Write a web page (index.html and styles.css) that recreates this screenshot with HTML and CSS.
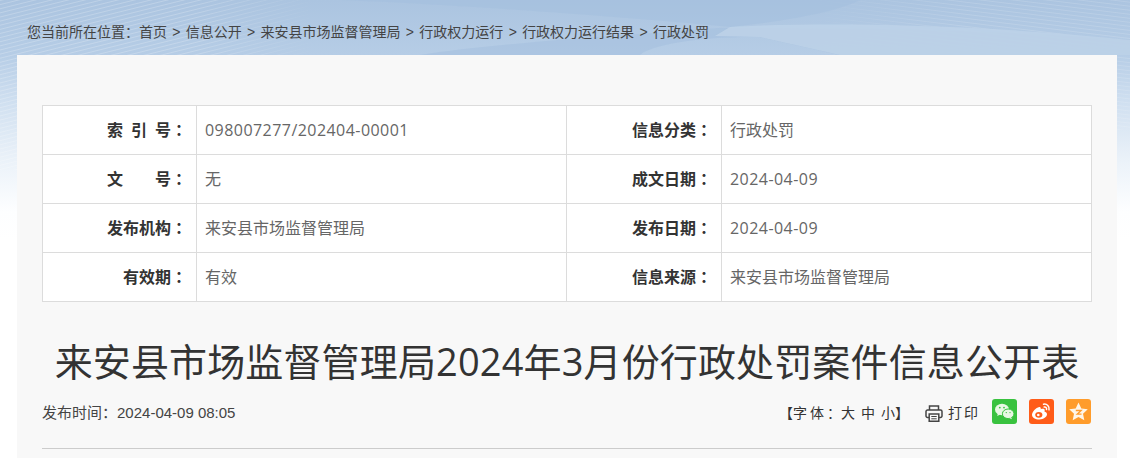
FILE: index.html
```html
<!DOCTYPE html>
<html lang="zh-CN">
<head>
<meta charset="utf-8">
<title>来安县市场监督管理局2024年3月份行政处罚案件信息公开表</title>
<link rel="stylesheet" href="styles.css">
</head>
<body>
<svg class="bg-art" viewBox="0 0 1130 240" width="1130" height="240" aria-hidden="true">
  <defs>
    <linearGradient id="fade" x1="0" y1="0" x2="0" y2="1">
      <stop offset="0" stop-color="#abc4e0"/>
      <stop offset="0.23" stop-color="#b6cde6"/>
      <stop offset="0.42" stop-color="#cfdff0"/>
      <stop offset="0.67" stop-color="#ebf2f9"/>
      <stop offset="0.88" stop-color="#fdfeff"/>
      <stop offset="1" stop-color="#ffffff"/>
    </linearGradient>
    <linearGradient id="edgeL" x1="0" y1="0" x2="1" y2="0">
      <stop offset="0" stop-color="#fff"/>
      <stop offset="0.6" stop-color="#fff"/>
      <stop offset="1" stop-color="#000"/>
    </linearGradient>
    <linearGradient id="edgeR" x1="0" y1="0" x2="1" y2="0">
      <stop offset="0" stop-color="#000"/>
      <stop offset="0.5" stop-color="#fff"/>
      <stop offset="1" stop-color="#fff"/>
    </linearGradient>
    <mask id="maskL"><rect width="320" height="170" fill="url(#edgeL)"/></mask>
    <mask id="maskR"><rect x="800" width="330" height="130" fill="url(#edgeR)"/></mask>
    <pattern id="hatchL" width="60" height="4" patternUnits="userSpaceOnUse" patternTransform="rotate(-14)">
      <rect y="0" width="60" height="1" fill="#ffffff" opacity=".22"/>
    </pattern>
    <pattern id="hatchR" width="60" height="4" patternUnits="userSpaceOnUse" patternTransform="rotate(7)">
      <rect y="0" width="60" height="1" fill="#ffffff" opacity=".14"/>
    </pattern>
  </defs>
  <rect width="1130" height="240" fill="url(#fade)"/>
  <rect width="320" height="170" fill="url(#hatchL)" mask="url(#maskL)"/>
  <rect x="800" width="330" height="130" fill="url(#hatchR)" mask="url(#maskR)"/>
  <path d="M340 0C450 4 640 18 730 27 650 34 500 42 420 55H640C650 45 700 36 760 37L840 55H1130V40C1000 30 860 28 720 28 800 20 840 10 860 0Z" fill="#a4bfde" opacity=".55"/>
  <path d="M730 27C820 22 980 24 1130 40V55H840L760 37 715 36Z" fill="#bcd1e8" opacity=".9"/>
</svg>
<nav class="crumbs">
  <span>您当前所在位置<b class="c">：</b></span><a>首页</a><i>&gt;</i><a>信息公开</a><i>&gt;</i><a>来安县市场监督管理局</a><i>&gt;</i><a>行政权力运行</a><i>&gt;</i><a>行政权力运行结果</a><i>&gt;</i><a>行政处罚</a>
</nav>
<main class="panel">
  <div class="meta">
    <div class="label">索 引 号<span class="c">：</span></div><div class="value num">098007277/202404-00001</div>
    <div class="label">信息分类<span class="c">：</span></div><div class="value">行政处罚</div>
    <div class="label">文 &emsp; 号<span class="c">：</span></div><div class="value">无</div>
    <div class="label">成文日期<span class="c">：</span></div><div class="value num">2024-04-09</div>
    <div class="label">发布机构<span class="c">：</span></div><div class="value">来安县市场监督管理局</div>
    <div class="label">发布日期<span class="c">：</span></div><div class="value num">2024-04-09</div>
    <div class="label">有效期<span class="c">：</span></div><div class="value">有效</div>
    <div class="label">信息来源<span class="c">：</span></div><div class="value">来安县市场监督管理局</div>
  </div>
  <h1 class="title">来安县市场监督管理局2024年3月份行政处罚案件信息公开表</h1>
  <div class="bar">
    <div class="pub">发布时间<span class="c">：</span>2024-04-09 08:05</div>
    <div class="tools">
      <span class="font-size"><em>【</em>字体<span class="c">：</span><a>大</a><a>中</a><a>小</a>】</span>
      <span class="print">
        <svg viewBox="0 0 18 17" width="18" height="17" aria-hidden="true" fill="none" stroke="#444" stroke-width="1.500">
          <path d="M4.500 5V1h9v4"/>
          <path d="M4 12.500H2.500A1.500 1.500 0 0 1 1 11V6.500A1.500 1.500 0 0 1 2.500 5h13A1.500 1.500 0 0 1 17 6.500V11a1.500 1.500 0 0 1-1.500 1.500H14"/>
          <path d="M4.200 9h9.600v7.200H4.200z"/>
          <path d="M6.300 11.500h5.400M6.300 13.800h5.400" stroke-width="1"/>
        </svg>
        打印
      </span>
      <span class="share wechat">
        <svg viewBox="0 0 25 25" width="25" height="25" aria-hidden="true">
          <ellipse cx="10" cy="10.500" rx="7" ry="5.800" fill="#e8f8e4"/>
          <path d="M6 14l-.8 3 3-1.600z" fill="#e8f8e4"/>
          <ellipse cx="16.200" cy="14.800" rx="5.800" ry="4.800" fill="#e8f8e4" stroke="#39c23f" stroke-width="1"/>
          <path d="M19 18l1 2.200-2.800-1.300z" fill="#e8f8e4"/>
          <circle cx="7.800" cy="8.600" r=".9" fill="#39c23f"/><circle cx="12" cy="8.600" r=".9" fill="#39c23f"/>
          <circle cx="14.300" cy="13.600" r=".7" fill="#39c23f"/><circle cx="18" cy="13.600" r=".7" fill="#39c23f"/>
        </svg>
      </span>
      <span class="share weibo">
        <svg viewBox="0 0 25 25" width="25" height="25" aria-hidden="true" fill="none">
          <path d="M10.500 20.500c-4.400 0-7.500-2-7.500-4.800 0-3 4-7.200 7.200-7.800 1.500-.2 1.800 1 1.500 2.400 2-.8 4-.6 4 1 0 .5-.1.900-.3 1.200 1.500.4 2.600 1.300 2.600 2.800 0 2.700-3.500 5.200-7.500 5.200z" fill="#fff"/>
          <ellipse cx="9.800" cy="15.800" rx="3.600" ry="2.900" fill="#ff5c19"/>
          <circle cx="9.300" cy="16" r="1.300" fill="#fff"/>
          <path d="M14.500 5.200c3.400-.7 6.300 2.200 5.500 5.600M15.200 8c1.500-.3 2.700 1 2.300 2.500" stroke="#fff" stroke-width="1.500" stroke-linecap="round"/>
        </svg>
      </span>
      <span class="share qzone">
        <svg viewBox="0 0 25 25" width="25" height="25" aria-hidden="true">
          <path d="M12.500 3.500l2.800 6 6.500.8-4.800 4.500 1.300 6.500-5.800-3.200-5.800 3.200 1.300-6.500-4.800-4.500 6.500-.8z" fill="#fff6e8"/>
          <path d="M9.800 11.500h5.400l-4 3.700h4.300" fill="none" stroke="#ff9c2b" stroke-width="1.300"/>
        </svg>
      </span>
    </div>
  </div>
</main>
</body>
</html>
```
FILE: styles.css
```css
* { box-sizing: border-box; }
html, body { height: 458px; overflow: hidden; }
body {
  position: relative;
  margin: 0;
  background: #fff;
  font-family: "Liberation Sans", "Noto Sans CJK SC", sans-serif;
  color: #333;
}
.bg-art { position: absolute; left: 0; top: 0; z-index: -1; }
.c { font-family: "Noto Sans CJK TC", sans-serif; font-weight: inherit; }
.crumbs {
  display: flex;
  align-items: center;
  height: 55px;
  padding: 8px 0 0 27px;
  font-size: 14px;
  line-height: 20px;
  color: #444;
}
.crumbs b { font-weight: 400; }
.crumbs i { font-style: normal; margin: 0 5.300px; }
.panel {
  margin-left: 17px;
  width: 1100px;
  height: 403px;
  padding: 50px 25px 0;
  background: #f8f8f8;
}
.meta {
  display: grid;
  grid-template-columns: 154px 370px 155px 370px;
  grid-auto-rows: 49px;
  width: 1050px;
  border-top: 1px solid #dcdcdc;
  border-left: 1px solid #dcdcdc;
  background: #fff;
  font-size: 16px;
}
.label, .value {
  display: flex;
  align-items: center;
  padding-bottom: 2px;
  border-right: 1px solid #dcdcdc;
  border-bottom: 1px solid #dcdcdc;
}
.label {
  justify-content: flex-end;
  padding-right: 9px;
  font-weight: 700;
  color: #333;
  white-space: pre;
  word-spacing: 3.550px;
}
.value {
  padding-left: 8px;
  color: #666;
  font-family: "Open Sans", "Noto Sans CJK SC", sans-serif;
}
.value.num { padding-bottom: 0; letter-spacing: .45px; }
.title {
  margin: 29px 0 0;
  font-family: "Open Sans", "Noto Sans CJK SC", sans-serif;
  font-size: 38px;
  font-weight: 400;
  line-height: 60px;
  letter-spacing: .14px;
  text-align: center;
  color: #333;
  white-space: nowrap;
}
.bar {
  display: flex;
  justify-content: space-between;
  align-items: center;
  height: 57px;
  padding: 0 1px 17px 0;
  margin-top: 1px;
  border-bottom: 1px solid #ccc;
  width: 1050px;
}
.pub { font-size: 15px; color: #444; }
.tools { display: flex; align-items: center; font-size: 14px; color: #333; }
.font-size { letter-spacing: 3px; margin-right: 13px; white-space: nowrap; }
.font-size .c, .font-size em { font-style: normal; letter-spacing: 0; }
.font-size a { margin-right: 3px; }
.font-size a:last-of-type { margin-right: 0; letter-spacing: 0; }
.print { display: flex; align-items: center; gap: 5px; letter-spacing: 2px; }
.print svg { margin-top: 3px; }
.share {
  display: block;
  width: 25px;
  height: 25px;
  margin-left: 12px;
  border-radius: 3px;
}
.share svg { display: block; }
.wechat { background: #39c23f; }
.weibo { background: #ff5c19; }
.qzone { background: #ff9c2b; }
```
